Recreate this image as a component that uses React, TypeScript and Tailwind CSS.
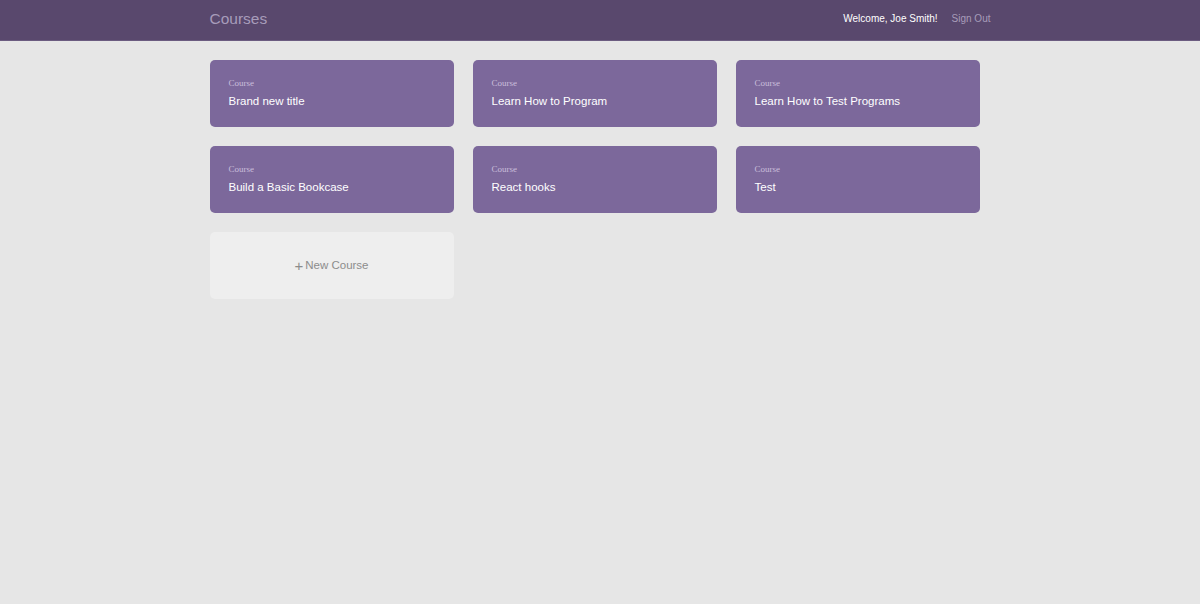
const courses = [
  "Brand new title",
  "Learn How to Program",
  "Learn How to Test Programs",
  "Build a Basic Bookcase",
  "React hooks",
  "Test",
];

const CourseCard = ({ title }: { title: string }) => (
  <a
    href="#"
    className="flex h-[67px] flex-col justify-center rounded-[5px] bg-[#7c689b] px-[19px] pb-[2px]"
  >
    <span className="font-['Liberation_Serif',serif] text-[9px] leading-[12px] text-[#cbbfdc]">
      Course
    </span>
    <span className="mt-[4px] font-['Liberation_Sans',Arial,sans-serif] text-[11.5px] leading-[16px] text-white">
      {title}
    </span>
  </a>
);

const App = () => {
  return (
    <div className="min-h-[604px] bg-[#e6e6e6] font-['Liberation_Sans',Arial,sans-serif]">
      <header className="h-[41px] border-b border-[#6b5c80] bg-[#59486d]">
        <div className="mx-auto flex h-[37px] w-[781px] items-center justify-between">
          <h1 className="text-[15.5px] text-[#a79cba]">Courses</h1>
          <nav className="flex items-center gap-[14px] text-[10px]">
            <span className="text-white">Welcome, Joe Smith!</span>
            <a href="#" className="text-[#a79cba]">
              Sign Out
            </a>
          </nav>
        </div>
      </header>

      <main className="mx-auto w-[781px] pt-[19px]">
        <div className="grid w-[770px] grid-cols-3 gap-x-[19px] gap-y-[19px]">
          {courses.map((c) => (
            <CourseCard key={c} title={c} />
          ))}
          <a
            href="#"
            className="flex h-[67px] items-center justify-center rounded-[5px] bg-[#eeeeee] text-[11.5px] text-[#8c8c8c]"
          >
            <span className="mr-[2px] text-[15px] font-light leading-none">+</span>
            New Course
          </a>
        </div>
      </main>
    </div>
  );
};

export default App;
